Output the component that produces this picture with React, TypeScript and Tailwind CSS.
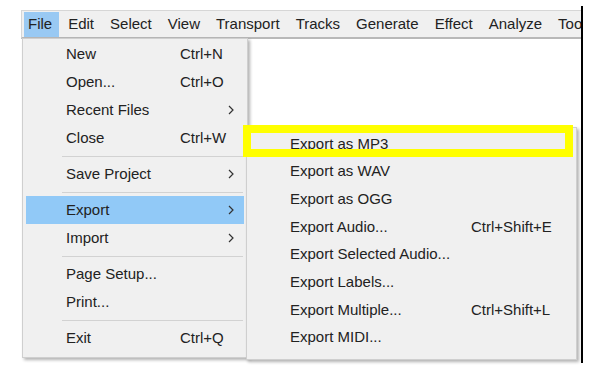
import React from "react";

type Item =
  | { sep: true }
  | { label: string; shortcut?: string; arrow?: boolean; active?: boolean };

const menuBar = ["File", "Edit", "Select", "View", "Transport", "Tracks", "Generate", "Effect", "Analyze", "Tools"];

const fileItems: Item[] = [
  { label: "New", shortcut: "Ctrl+N" },
  { label: "Open...", shortcut: "Ctrl+O" },
  { label: "Recent Files", arrow: true },
  { label: "Close", shortcut: "Ctrl+W" },
  { sep: true },
  { label: "Save Project", arrow: true },
  { sep: true },
  { label: "Export", arrow: true, active: true },
  { label: "Import", arrow: true },
  { sep: true },
  { label: "Page Setup..." },
  { label: "Print..." },
  { sep: true },
  { label: "Exit", shortcut: "Ctrl+Q" },
];

const exportItems = [
  { label: "Export as MP3" },
  { label: "Export as WAV" },
  { label: "Export as OGG" },
  { label: "Export Audio...", shortcut: "Ctrl+Shift+E" },
  { label: "Export Selected Audio..." },
  { label: "Export Labels..." },
  { label: "Export Multiple...", shortcut: "Ctrl+Shift+L" },
  { label: "Export MIDI..." },
];

function Chevron() {
  return (
    <svg width="6" height="10" viewBox="0 0 6 10" className="block">
      <path d="M1 1 L5 5 L1 9" fill="none" stroke="#333" strokeWidth="1.2" />
    </svg>
  );
}

export default function App() {
  return (
    <div
      className="relative w-[600px] h-[374px] bg-white overflow-hidden text-[15px] text-[#222]"
      style={{ fontFamily: '"Liberation Sans", Arial, sans-serif' }}
    >
      {/* menu bar */}
      <div className="absolute left-[21px] top-[10px] w-[560px] h-[29px] bg-[#f0f0f0] border-t border-l border-[#d6d6d6] border-b-2 border-b-[#b8b8b8] flex items-center pl-[2px] gap-[5px] overflow-hidden">
        {menuBar.map((m, i) => (
          <div
            key={m}
            className={`h-[25px] flex items-center pl-[4px] pr-[7px] whitespace-nowrap ${i === 0 ? "bg-[#99c9f3]" : ""}`}
          >
            {m}
          </div>
        ))}
      </div>

      {/* window right edge */}
      <div className="absolute left-[581px] top-[6px] w-[2px] h-[357px] bg-black" />

      {/* File dropdown */}
      <div className="absolute left-[22px] top-[38px] w-[226px] h-[320px] bg-[#f0f0f0] border border-[#cfcfcf] shadow-[2px_2px_3px_rgba(0,0,0,0.3)] pt-px">
        {fileItems.map((it, i) =>
          "sep" in it ? (
            <div key={i} className="h-[8px] flex items-center ml-[39px] mr-[4px]">
              <div className="h-px w-full bg-[#d2d2d2]" />
            </div>
          ) : (
            <div
              key={i}
              className={`h-[28px] mx-[3px] flex items-center pl-[40px] ${it.active ? "bg-[#91c9f7]" : ""}`}
            >
              <span className="w-[114px] whitespace-nowrap">{it.label}</span>
              <span className="w-[48px] whitespace-nowrap">{it.shortcut}</span>
              {it.arrow && <Chevron />}
            </div>
          )
        )}
      </div>

      {/* Export submenu */}
      <div className="absolute left-[246px] top-[127px] w-[331px] h-[233px] bg-[#f0f0f0] border border-[#cfcfcf] shadow-[2px_2px_3px_rgba(0,0,0,0.3)] pt-[2px]">
        {exportItems.map((it) => (
          <div key={it.label} className="h-[27.7px] flex items-center pl-[43px]">
            <span className="w-[181px] whitespace-nowrap">{it.label}</span>
            <span className="whitespace-nowrap">{it.shortcut}</span>
          </div>
        ))}
      </div>

      {/* highlight box */}
      <div className="absolute left-[243px] top-[125px] w-[330px] h-[32px] border-[8px] border-[#ffff00]" />
    </div>
  );
}
